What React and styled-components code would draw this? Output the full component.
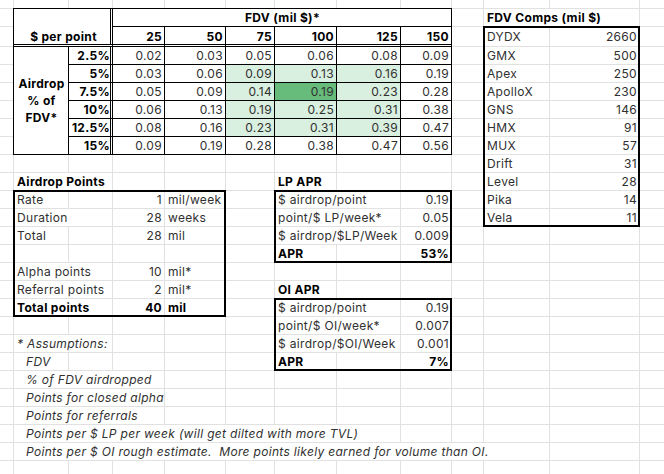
import React from 'react'
import styled, { createGlobalStyle, css } from 'styled-components'

const GlobalStyle = createGlobalStyle`
  html, body {
    margin: 0;
    padding: 0;
    background: #fff;
  }
  body {
    font-family: Inter, "Liberation Sans", sans-serif;
  }
`

// spreadsheet track sizes (1px gap = gridline)
const COLS = [13, 54, 43, 51, 60, 48, 61, 63, 50, 31, 65, 89, 40]
const ROWS = [8, 17, 19, ...Array(24).fill(17)]

const Sheet = styled.div`
  display: grid;
  grid-template-columns: ${COLS.map((c) => c + 'px').join(' ')};
  grid-template-rows: ${ROWS.map((r) => r + 'px').join(' ')};
  gap: 1px;
  width: 664px;
  height: 474px;
  overflow: hidden;
  background: #e1e1e1;
  font-size: 12px;
  letter-spacing: 0.32px;
  color: #303030;
`

const Cell = styled.div`
  grid-column: ${({ $c, $cs = 1 }) => `${$c} / span ${$cs}`};
  grid-row: ${({ $r, $rs = 1 }) => `${$r} / span ${$rs}`};
  display: flex;
  align-items: ${({ $bottom }) => ($bottom ? 'flex-end' : 'center')};
  justify-content: ${({ $align }) =>
    $align === 'right' ? 'flex-end' : $align === 'center' ? 'center' : 'flex-start'};
  text-align: ${({ $align }) => $align || 'left'};
  padding: 0 2px 0 ${({ $indent }) => ($indent ? 12 : 3)}px;
  padding-bottom: ${({ $bottom }) => ($bottom ? '1px' : '0')};
  background: ${({ $fill }) => $fill || '#fff'};
  line-height: 17px;
  white-space: pre;
  font-weight: ${({ $bold }) => ($bold ? 700 : 400)};
  font-style: ${({ $italic }) => ($italic ? 'italic' : 'normal')};
  color: ${({ $bold }) => ($bold ? '#000' : 'inherit')};
  ${({ $spill }) => $spill && css`position: relative; z-index: 1;`}
  ${({ $line, $dblBottom, $dblRight }) => {
    const s = []
    if ($dblBottom) s.push('inset 0 -1px 0 #fff', 'inset 0 -2px 0 #000')
    if ($dblRight) s.push('inset -1px 0 0 #fff', 'inset -2px 0 0 #000')
    if ($line) s.push('0 0 0 1px #000')
    return s.length ? css`box-shadow: ${s.join(', ')};` : ''
  }}
`

const Frame = styled.div`
  grid-column: ${({ $c, $cs }) => `${$c} / span ${$cs}`};
  grid-row: ${({ $r, $rs }) => `${$r} / span ${$rs}`};
  z-index: 2;
  pointer-events: none;
  box-shadow: 0 0 0 1px #000, inset 0 0 0 1px #000;
`

const LIGHT = '#d9efdf'
const DARK = '#67bb7b'

const pct = ['2.5%', '5%', '7.5%', '10%', '12.5%', '15%']
const fdv = ['25', '50', '75', '100', '125', '150']
const values = [
  ['0.02', '0.03', '0.05', '0.06', '0.08', '0.09'],
  ['0.03', '0.06', '0.09', '0.13', '0.16', '0.19'],
  ['0.05', '0.09', '0.14', '0.19', '0.23', '0.28'],
  ['0.06', '0.13', '0.19', '0.25', '0.31', '0.38'],
  ['0.08', '0.16', '0.23', '0.31', '0.39', '0.47'],
  ['0.09', '0.19', '0.28', '0.38', '0.47', '0.56'],
]
const comps = [
  ['DYDX', '2660'], ['GMX', '500'], ['Apex', '250'], ['ApolloX', '230'], ['GNS', '146'],
  ['HMX', '91'], ['MUX', '57'], ['Drift', '31'], ['Level', '28'], ['Pika', '14'], ['Vela', '11'],
]

const fillFor = (ri, ci) => {
  if (ri === 2 && ci === 3) return DARK
  if (ri >= 1 && ri <= 4 && ci >= 2 && ci <= 4) return LIGHT
  return undefined
}

const note = { $italic: true, $indent: true, $spill: true }

// [row, col, text, props]
const cells = [
  [2, 2, '$ per point', { $rs: 2, $cs: 2, $bold: true, $align: 'center', $bottom: true, $line: true, $dblBottom: true, $dblRight: true }],
  [2, 4, 'FDV (mil $)*', { $cs: 6, $bold: true, $align: 'center', $line: true }],
  [2, 11, 'FDV Comps (mil $)', { $cs: 2, $bold: true }],
  ...fdv.map((f, i) => [3, 4 + i, f, { $bold: true, $align: 'right', $line: true, $dblBottom: true }]),
  [4, 2, 'Airdrop\n% of\nFDV*', { $rs: 6, $bold: true, $align: 'center', $line: true }],
  ...pct.map((p, i) => [4 + i, 3, p, { $bold: true, $align: 'right', $line: true, $dblRight: true }]),
  ...values.flatMap((row, ri) =>
    row.map((v, ci) => [4 + ri, 4 + ci, v, { $align: 'right', $line: true, $fill: fillFor(ri, ci) }])
  ),
  ...comps.flatMap(([n, v], i) => [
    [3 + i, 11, n, {}],
    [3 + i, 12, v, { $align: 'right' }],
  ]),

  [11, 2, 'Airdrop Points', { $cs: 2, $bold: true }],
  [12, 2, 'Rate', {}],
  [12, 4, '1', { $align: 'right' }],
  [12, 5, 'mil/week', {}],
  [13, 2, 'Duration', { $cs: 2 }],
  [13, 4, '28', { $align: 'right' }],
  [13, 5, 'weeks', {}],
  [14, 2, 'Total', {}],
  [14, 4, '28', { $align: 'right' }],
  [14, 5, 'mil', {}],
  [16, 2, 'Alpha points', { $cs: 2 }],
  [16, 4, '10', { $align: 'right' }],
  [16, 5, 'mil*', {}],
  [17, 2, 'Referral points', { $cs: 2 }],
  [17, 4, '2', { $align: 'right' }],
  [17, 5, 'mil*', {}],
  [18, 2, 'Total points', { $cs: 2, $bold: true }],
  [18, 4, '40', { $align: 'right', $bold: true }],
  [18, 5, 'mil', { $bold: true }],

  [11, 7, 'LP APR', { $bold: true }],
  [12, 7, '$ airdrop/point', { $cs: 2 }],
  [12, 9, '0.19', { $align: 'right' }],
  [13, 7, 'point/$ LP/week*', { $cs: 2 }],
  [13, 9, '0.05', { $align: 'right' }],
  [14, 7, '$ airdrop/$LP/Week', { $cs: 2 }],
  [14, 9, '0.009', { $align: 'right' }],
  [15, 7, 'APR', { $bold: true }],
  [15, 9, '53%', { $align: 'right', $bold: true }],

  [17, 7, 'OI APR', { $bold: true }],
  [18, 7, '$ airdrop/point', { $cs: 2 }],
  [18, 9, '0.19', { $align: 'right' }],
  [19, 7, 'point/$ OI/week*', { $cs: 2 }],
  [19, 9, '0.007', { $align: 'right' }],
  [20, 7, '$ airdrop/$OI/Week', { $cs: 2 }],
  [20, 9, '0.001', { $align: 'right' }],
  [21, 7, 'APR', { $bold: true }],
  [21, 9, '7%', { $align: 'right', $bold: true }],

  [20, 2, '* Assumptions:', { $cs: 2, $italic: true }],
  [21, 2, 'FDV', note],
  [22, 2, '% of FDV airdropped', { $cs: 3, ...note }],
  [23, 2, 'Points for closed alpha', { $cs: 3, ...note }],
  [24, 2, 'Points for referrals', { $cs: 3, ...note }],
  [25, 2, 'Points per $ LP per week (will get dilted with more TVL)', { $cs: 7, ...note }],
  [26, 2, 'Points per $ OI rough estimate.  More points likely earned for volume than OI.', { $cs: 10, ...note }],
]

const frames = [
  { $r: 12, $c: 2, $rs: 7, $cs: 4 },
  { $r: 12, $c: 7, $rs: 4, $cs: 3 },
  { $r: 18, $c: 7, $rs: 4, $cs: 3 },
  { $r: 3, $c: 11, $rs: 11, $cs: 2 },
]

const buildGrid = () => {
  const taken = new Set()
  cells.forEach(([r, c, , p]) => {
    for (let i = 0; i < (p.$rs || 1); i++)
      for (let j = 0; j < (p.$cs || 1); j++) taken.add(`${r + i}-${c + j}`)
  })
  const blanks = []
  ROWS.forEach((_, ri) =>
    COLS.forEach((__, ci) => {
      const key = `${ri + 1}-${ci + 1}`
      if (!taken.has(key)) blanks.push([ri + 1, ci + 1])
    })
  )
  return blanks
}

const blanks = buildGrid()

export default function App() {
  return (
    <>
      <GlobalStyle />
      <Sheet>
        {blanks.map(([r, c]) => (
          <Cell key={`b${r}-${c}`} $r={r} $c={c} />
        ))}
        {cells.map(([r, c, text, p]) => (
          <Cell key={`c${r}-${c}`} $r={r} $c={c} {...p}>
            {text}
          </Cell>
        ))}
        {frames.map((f, i) => (
          <Frame key={i} {...f} />
        ))}
      </Sheet>
    </>
  )
}
